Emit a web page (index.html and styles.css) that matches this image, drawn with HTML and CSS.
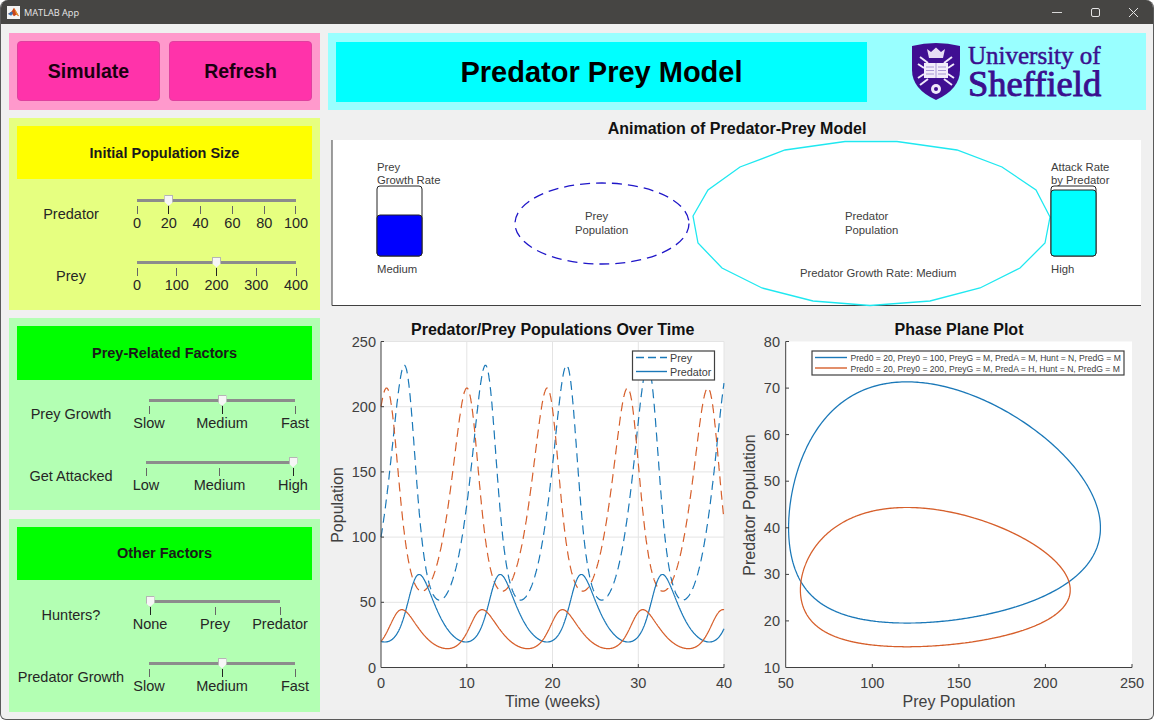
FILE: index.html
```html
<!DOCTYPE html>
<html lang="en">
<head>
    <meta charset="UTF-8">
    <meta name="viewport" content="width=device-width, initial-scale=1.0">
    <title>MATLAB App</title>
    <link rel="stylesheet" href="styles.css">
</head>
<body>
<div class="window">
    <header class="titlebar">
        <svg class="app-icon" viewBox="0 0 14 14">
            <rect width="14" height="14" fill="#f4f4f4"/>
            <path d="M1 8.5 L5 6 L7.5 2 L9.5 5 L13 11 L10 9.5 L7.5 11 L5.5 8.5 Z" fill="#c9461c"/>
            <path d="M1 8.5 L5 6 L6.5 7.5 L4.5 10.5 Z" fill="#3a6fb0"/>
            <path d="M7.5 2 L9.5 5 L13 11 L10 9.5 Z" fill="#e8912d"/>
        </svg>
        <span class="app-name">MATLAB App</span>
        <div class="win-controls">
            <svg viewBox="0 0 38 24"><path d="M14 12.5 H24" stroke="#d8d8d8"/></svg>
            <svg viewBox="0 0 38 24"><rect x="15.5" y="8.5" width="8" height="8" rx="1.5" fill="none" stroke="#e4e4e4"/></svg>
            <svg viewBox="0 0 38 24"><path d="M15 8 L24 17 M24 8 L15 17" stroke="#e4e4e4" fill="none"/></svg>
        </div>
    </header>

    <main class="app">
        <div class="col-left">
            <section class="panel panel-pink">
                <button class="big-btn">Simulate</button>
                <button class="big-btn">Refresh</button>
            </section>

            <section class="panel panel-lime">
                <h2 class="panel-head head-yellow">Initial Population Size</h2>
                <div class="row">
                    <span class="row-label">Predator</span>
                    <div class="slider slider-pop">
                        <div class="track"><span class="thumb" style="left: 20%"></span></div>
                        <div class="ticks">
                            <span class="tick">0</span>
                            <span class="tick on">20</span>
                            <span class="tick">40</span>
                            <span class="tick">60</span>
                            <span class="tick">80</span>
                            <span class="tick">100</span>
                        </div>
                    </div>
                </div>
                <div class="row">
                    <span class="row-label">Prey</span>
                    <div class="slider slider-pop">
                        <div class="track"><span class="thumb" style="left: 50%"></span></div>
                        <div class="ticks">
                            <span class="tick">0</span>
                            <span class="tick">100</span>
                            <span class="tick on">200</span>
                            <span class="tick">300</span>
                            <span class="tick">400</span>
                        </div>
                    </div>
                </div>
            </section>

            <section class="panel panel-green">
                <h2 class="panel-head panel-head-tall head-green">Prey-Related Factors</h2>
                <div class="row">
                    <span class="row-label">Prey Growth</span>
                    <div class="slider slider-speed">
                        <div class="track"><span class="thumb" style="left: 50%"></span></div>
                        <div class="ticks">
                            <span class="tick">Slow</span>
                            <span class="tick on">Medium</span>
                            <span class="tick">Fast</span>
                        </div>
                    </div>
                </div>
                <div class="row">
                    <span class="row-label">Get Attacked</span>
                    <div class="slider slider-attack">
                        <div class="track"><span class="thumb" style="left: 100%"></span></div>
                        <div class="ticks">
                            <span class="tick">Low</span>
                            <span class="tick">Medium</span>
                            <span class="tick on">High</span>
                        </div>
                    </div>
                </div>
            </section>

            <section class="panel panel-green panel-last">
                <h2 class="panel-head head-green">Other Factors</h2>
                <div class="row">
                    <span class="row-label">Hunters?</span>
                    <div class="slider slider-hunt">
                        <div class="track"><span class="thumb" style="left: 0%"></span></div>
                        <div class="ticks">
                            <span class="tick on">None</span>
                            <span class="tick">Prey</span>
                            <span class="tick">Predator</span>
                        </div>
                    </div>
                </div>
                <div class="row">
                    <span class="row-label">Predator Growth</span>
                    <div class="slider slider-speed">
                        <div class="track"><span class="thumb" style="left: 50%"></span></div>
                        <div class="ticks">
                            <span class="tick">Slow</span>
                            <span class="tick on">Medium</span>
                            <span class="tick">Fast</span>
                        </div>
                    </div>
                </div>
            </section>
        </div>

        <div class="col-right">
            <section class="banner">
                <h1 class="banner-title">Predator Prey Model</h1>
                <div class="logo">
                    <svg class="shield" viewBox="0 0 48 57">
                        <path d="M0 3 Q12 0 24 0 Q36 0 48 3 V27 Q48 46 24 57 Q0 46 0 27 Z" fill="#3f0f92"/>
                        <!-- crown -->
                        <path d="M15 6 L19 9 L24 4.5 L29 9 L33 6 L31 15 H17 Z" fill="#e6dcf5"/>
                        <!-- crossed arrows -->
                        <path d="M8 14 L16 20 M6 21 L12 25 M40 14 L32 20 M42 21 L36 25 M8 42 L16 36 M6 35 L12 31 M40 42 L32 36 M42 35 L36 31" stroke="#efe9fa" stroke-width="2" fill="none"/>
                        <!-- book -->
                        <rect x="12" y="20" width="24" height="15" fill="#f1ecfa"/>
                        <path d="M24 20 V35 M14 24 H22 M14 27.5 H22 M14 31 H22 M26 24 H34 M26 27.5 H34 M26 31 H34" stroke="#a898d4" fill="none"/>
                        <!-- rose -->
                        <circle cx="24" cy="46" r="5" fill="#efe9fa"/>
                        <circle cx="24" cy="46" r="2" fill="#3f0f92"/>
                    </svg>
                    <div class="wordmark">
                        <span class="word-top">University of</span>
                        <span class="word-main">Sheffield</span>
                    </div>
                </div>
            </section>

            <section class="anim">
                <h2 class="plot-title">Animation of Predator-Prey Model</h2>
                <svg class="anim-canvas" viewBox="328 140 818 168">
                    <rect x="332" y="140" width="809" height="166" fill="#fff"/>
                    <path d="M332 140 V305.5 H1141" fill="none" stroke="#404040" stroke-width="1"/>

                    <text class="anim-text" x="377" y="171">Prey</text>
                    <text class="anim-text" x="377" y="184">Growth Rate</text>
                    <rect x="377" y="186" width="45" height="70" rx="3" fill="#fff" stroke="#222"/>
                    <rect x="377" y="215" width="45" height="41" rx="3" fill="#0000ff" stroke="#222"/>
                    <text class="anim-text" x="377" y="273">Medium</text>

                    <ellipse cx="602" cy="223.5" rx="87" ry="40.5" fill="none" stroke="#1f16c8" stroke-width="1.3" stroke-dasharray="10 6"/>
                    <text class="anim-text" x="585" y="220">Prey</text>
                    <text class="anim-text" x="575" y="234">Population</text>

                    <polygon points="1050,217 1036,190 1002,167 957,150 897,141.5 845,141.5 785,150 740,167 708,190 693,216 698,243 722,268 762,288 813,301 870,305.5 930,301 980,288 1020,268 1045,243" fill="none" stroke="#1fe8f0" stroke-width="1.3"/>
                    <text class="anim-text" x="845" y="220">Predator</text>
                    <text class="anim-text" x="845" y="234">Population</text>
                    <text class="anim-text" x="800" y="277">Predator Growth Rate: Medium</text>

                    <text class="anim-text" x="1051" y="171">Attack Rate</text>
                    <text class="anim-text" x="1051" y="184">by Predator</text>
                    <rect x="1051" y="186" width="45" height="70" rx="3" fill="#fff" stroke="#222"/>
                    <rect x="1051" y="190" width="45" height="66" rx="3" fill="#00ffff" stroke="#222"/>
                    <text class="anim-text" x="1051" y="273">High</text>
                </svg>
            </section>

            <section class="plots">
                <svg class="chart" viewBox="0 0 409 400">
                    <rect x="53" y="25.5" width="343" height="326" fill="#fff"/>
                    <path class="grid" d="M138.8 25.5 V351.5 M224.5 25.5 V351.5 M310.3 25.5 V351.5 M396 25.5 V351.5 M53 25.5 H396 M53 90.7 H396 M53 155.9 H396 M53 221.1 H396 M53 286.3 H396"/>
                    <path class="series" id="timePreyB" stroke="#1a78b8" stroke-dasharray="9 5.5"/>
                    <path class="series" id="timePreyO" stroke="#d65f2b" stroke-dasharray="9 5.5"/>
                    <path class="series" id="timePredB" stroke="#1a78b8"/>
                    <path class="series" id="timePredO" stroke="#d65f2b"/>
                    <path class="axis" d="M53 25.5 V351.5 H396 M53 25.5 H56 M53 90.7 H56 M53 155.9 H56 M53 221.1 H56 M53 286.3 H56 M138.8 351.5 V348 M224.5 351.5 V348 M310.3 351.5 V348 M396 351.5 V348"/>
                    <text class="plot-heading" x="224.7" y="18.5">Predator/Prey Populations Over Time</text>
                    <text class="tick-y" x="48" y="30.5">250</text>
                    <text class="tick-y" x="48" y="95.7">200</text>
                    <text class="tick-y" x="48" y="160.9">150</text>
                    <text class="tick-y" x="48" y="226.1">100</text>
                    <text class="tick-y" x="48" y="291.3">50</text>
                    <text class="tick-y" x="48" y="356.5">0</text>
                    <text class="tick-x" x="53" y="372">0</text>
                    <text class="tick-x" x="138.8" y="372">10</text>
                    <text class="tick-x" x="224.5" y="372">20</text>
                    <text class="tick-x" x="310.3" y="372">30</text>
                    <text class="tick-x" x="396" y="372">40</text>
                    <text class="axis-label" x="224.7" y="390.5">Time (weeks)</text>
                    <text class="axis-label" transform="translate(15 189) rotate(-90)">Population</text>
                    <rect class="legend-box" x="304.5" y="35" width="82" height="29"/>
                    <path class="legend-line" stroke="#1a78b8" stroke-dasharray="8 4" d="M308 41.5 H339"/>
                    <path class="legend-line" stroke="#1a78b8" d="M308 55.5 H339"/>
                    <text class="legend-text" x="342" y="45.5">Prey</text>
                    <text class="legend-text" x="342" y="59.5">Predator</text>
                </svg>

                <svg class="chart" viewBox="0 0 409 400">
                    <rect x="48.7" y="25.5" width="346.3" height="326" fill="#fff"/>
                    <path class="series" id="phaseB" stroke="#1a78b8"/>
                    <path class="series" id="phaseO" stroke="#d65f2b"/>
                    <path class="axis" d="M48.7 25.5 V351.5 H395 M48.7 25.5 H52 M48.7 72.1 H52 M48.7 118.6 H52 M48.7 165.2 H52 M48.7 211.8 H52 M48.7 258.4 H52 M48.7 304.9 H52 M135.3 351.5 V348 M221.9 351.5 V348 M308.4 351.5 V348 M395 351.5 V348"/>
                    <text class="plot-heading" x="222" y="18.5">Phase Plane Plot</text>
                    <text class="tick-y" x="43" y="30.5">80</text>
                    <text class="tick-y" x="43" y="77.1">70</text>
                    <text class="tick-y" x="43" y="123.6">60</text>
                    <text class="tick-y" x="43" y="170.2">50</text>
                    <text class="tick-y" x="43" y="216.8">40</text>
                    <text class="tick-y" x="43" y="263.4">30</text>
                    <text class="tick-y" x="43" y="309.9">20</text>
                    <text class="tick-y" x="43" y="356.5">10</text>
                    <text class="tick-x" x="48.7" y="372">50</text>
                    <text class="tick-x" x="135.3" y="372">100</text>
                    <text class="tick-x" x="221.9" y="372">150</text>
                    <text class="tick-x" x="308.4" y="372">200</text>
                    <text class="tick-x" x="395" y="372">250</text>
                    <text class="axis-label" x="222" y="390.5">Prey Population</text>
                    <text class="axis-label" transform="translate(18 189) rotate(-90)">Predator Population</text>
                    <rect class="legend-box" x="75" y="35" width="312" height="24"/>
                    <path class="legend-line" stroke="#1a78b8" d="M78 41.5 H110"/>
                    <path class="legend-line" stroke="#d65f2b" d="M78 52 H110"/>
                    <text class="legend-small" x="113.5" y="45">Pred0 = 20, Prey0 = 100, PreyG = M, PredA = M, Hunt = N, PredG = M</text>
                    <text class="legend-small" x="113.5" y="55.5">Pred0 = 20, Prey0 = 200, PreyG = M, PredA = H, Hunt = N, PredG = M</text>
                </svg>
            </section>
        </div>
    </main>
</div>
<script src="plots.js"></script>
</body>
</html>
```

FILE: styles.css
```css
* {
    box-sizing: border-box;
    margin: 0;
    padding: 0;
}

body {
    font-family: 'Liberation Sans', Arial, sans-serif;
    background: #fff;
    color: #1a1a1a;
}

.window {
    width: 1154px;
    height: 720px;
    background: #f0f0f0;
    border: 1px solid #5a5a5a;
    border-top: none;
    border-radius: 8px 8px 6px 6px;
    overflow: hidden;
}

.titlebar {
    height: 24px;
    background: #464543;
    display: flex;
    align-items: center;
    padding-left: 6px;
}

.app-icon {
    width: 13px;
    height: 13px;
}

.app-name {
    margin-left: 4px;
    font-family: 'Open Sans', sans-serif;
    font-size: 9.2px;
    color: #e8e8e8;
}

.win-controls {
    margin-left: auto;
    display: flex;
    margin-right: 1px;
}

.win-controls svg {
    width: 38px;
    height: 24px;
}

.app {
    display: grid;
    grid-template-columns: 311px 818px;
    column-gap: 8px;
    padding: 9px 0 0 8px;
}

.col-left {
    display: flex;
    flex-direction: column;
    gap: 8px;
}

.panel {
    height: 192px;
    padding: 8px;
}

.panel-last {
    margin-top: 1px;
    height: 193px;
}

.panel-last .panel-head {
    line-height: 52px;
}

.panel-pink {
    height: 77px;
    background: #ff99cc;
    display: flex;
    gap: 9px;
}

.panel-lime {
    background: #e6ff80;
}

.panel-green {
    background: #b3ffb3;
}

.big-btn {
    width: 143px;
    height: 60px;
    background: #ff33aa;
    border: 1px solid #e0409f;
    border-radius: 4px;
    font-family: inherit;
    font-size: 19.5px;
    font-weight: bold;
    color: #1a0010;
}

.panel-head {
    height: 53px;
    margin-bottom: 11px;
    font-size: 14.5px;
    line-height: 54px;
    text-align: center;
}

.panel-head-tall {
    height: 54px;
    margin-bottom: 10px;
}

.head-yellow {
    background: #ffff00;
}

.head-green {
    background: #00ff00;
}

.row {
    height: 48px;
    margin-bottom: 13.5px;
    display: flex;
}

.row-label {
    width: 108px;
    align-self: center;
    text-align: center;
    font-size: 14.5px;
    white-space: nowrap;
    color: #262626;
}

/* each slider family has its own track span */
.slider {
    padding-top: 9px;
}

.slider-pop {
    margin-left: 12px;
    width: 159px;
}

.slider-speed {
    margin-left: 24px;
    width: 146px;
}

.slider-attack {
    margin-left: 21px;
    width: 147px;
}

.slider-hunt {
    margin-left: 25px;
    width: 130px;
}

.track {
    position: relative;
    height: 3px;
    background: #8c8c8c;
}

.thumb {
    position: absolute;
    top: -4px;
    width: 9px;
    height: 11px;
    margin-left: -4.5px;
    background: #f6f6f6;
    border: 1px solid #b5b5b5;
    clip-path: polygon(0 0, 100% 0, 100% 62%, 50% 100%, 0 62%);
}

.ticks {
    display: flex;
    justify-content: space-between;
    margin-top: 4px;
}

.tick {
    width: 0;
    display: flex;
    flex-direction: column;
    align-items: center;
    font-size: 14.5px;
    line-height: 19px;
    white-space: nowrap;
    color: #262626;
}

.tick::before {
    content: "";
    width: 1px;
    height: 8px;
    flex: none;
    background: #666;
}

.tick.on::before {
    background: #222;
}

.col-right {
    display: flex;
    flex-direction: column;
    gap: 8px;
}

.banner {
    height: 77px;
    background: #99ffff;
    display: flex;
    align-items: center;
    padding-left: 8px;
}

.banner-title {
    width: 531px;
    height: 60px;
    background: #00ffff;
    font-size: 29px;
    line-height: 60px;
    text-align: center;
    color: #000;
}

.logo {
    margin-left: 45px;
    display: flex;
    align-items: center;
    gap: 8px;
}

.shield {
    width: 48px;
    height: 57px;
}

.wordmark {
    display: flex;
    flex-direction: column;
    font-family: 'Liberation Serif', serif;
    color: #3a0f8f;
}

.word-top {
    font-size: 25px;
    line-height: 24px;
    -webkit-text-stroke: 0.5px #3a0f8f;
}

.word-main {
    font-size: 36.5px;
    line-height: 32px;
    -webkit-text-stroke: 0.9px #3a0f8f;
}

.anim {
    height: 190px;
    display: flex;
    flex-direction: column;
}

.plot-title {
    height: 22px;
    font-size: 16px;
    line-height: 21px;
    text-align: center;
    color: #111;
}

.anim-canvas {
    width: 818px;
    height: 168px;
}

.anim-text {
    font-size: 11.3px;
    fill: #404040;
}

.plots {
    display: grid;
    grid-template-columns: 409px 409px;
}

.chart {
    width: 409px;
    height: 400px;
}

.grid {
    fill: none;
    stroke: #e4e4e4;
}

.series {
    fill: none;
    stroke-width: 1.2;
}

.axis {
    fill: none;
    stroke: #404040;
}

.plot-heading {
    font-size: 16px;
    font-weight: bold;
    text-anchor: middle;
    fill: #111;
}

.tick-y {
    font-size: 14.5px;
    text-anchor: end;
    fill: #404040;
}

.tick-x {
    font-size: 14.5px;
    text-anchor: middle;
    fill: #404040;
}

.axis-label {
    font-size: 16px;
    text-anchor: middle;
    fill: #404040;
}

.legend-box {
    fill: #fff;
    stroke: #404040;
    stroke-width: 1.2;
}

.legend-line {
    fill: none;
    stroke-width: 1.4;
}

.legend-text {
    font-size: 10.8px;
    fill: #404040;
}

.legend-small {
    font-size: 8.6px;
    fill: #404040;
}
```

FILE: plots.js
```js
// Lotka-Volterra runs behind the two charts
const GROWTH = 0.798;
const DEATH = 0.5985;
const CONVERT = DEATH / 120;

function simulate(prey0, pred0, attack) {
    const dt = 0.02;
    const out = [];
    let x = prey0, y = pred0;
    const f = (x, y) => [GROWTH * x - attack * x * y, -DEATH * y + CONVERT * x * y];
    for (let i = 0; i <= 2000; i++) {
        out.push({ t: i * dt, x, y });
        const k1 = f(x, y);
        const k2 = f(x + dt / 2 * k1[0], y + dt / 2 * k1[1]);
        const k3 = f(x + dt / 2 * k2[0], y + dt / 2 * k2[1]);
        const k4 = f(x + dt * k3[0], y + dt * k3[1]);
        x += dt / 6 * (k1[0] + 2 * k2[0] + 2 * k3[0] + k4[0]);
        y += dt / 6 * (k1[1] + 2 * k2[1] + 2 * k3[1] + k4[1]);
    }
    return out;
}

function draw(id, run, px, py) {
    const d = run.map((p, i) => (i ? 'L' : 'M') + px(p).toFixed(1) + ' ' + py(p).toFixed(1)).join(' ');
    document.getElementById(id).setAttribute('d', d);
}

// attack rate is 1.5x higher in the second run
const blue = simulate(100, 20, GROWTH / 40);
const orange = simulate(200, 20, GROWTH * 1.5 / 40);

const timeX = p => 53 + p.t / 40 * 343;
const timeY = v => 351.5 - v / 250 * 326;
draw('timePreyB', blue, timeX, p => timeY(p.x));
draw('timePreyO', orange, timeX, p => timeY(p.x));
draw('timePredB', blue, timeX, p => timeY(p.y));
draw('timePredO', orange, timeX, p => timeY(p.y));

const phaseX = p => 48.7 + (p.x - 50) / 200 * 346.3;
const phaseY = p => 351.5 - (p.y - 10) / 70 * 326;
draw('phaseB', blue, phaseX, phaseY);
draw('phaseO', orange, phaseX, phaseY);
```
